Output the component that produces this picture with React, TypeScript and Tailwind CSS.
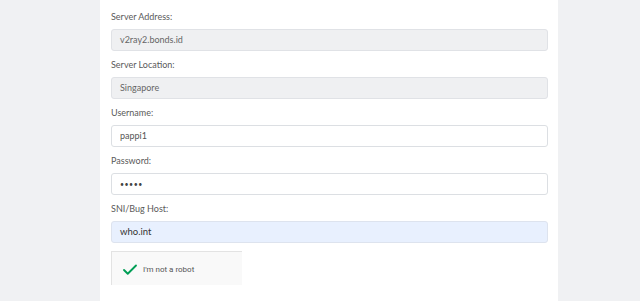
import { Check } from "lucide-react";

const fields = [
  { label: "Server Address:", value: "v2ray2.bonds.id", kind: "disabled" },
  { label: "Server Location:", value: "Singapore", kind: "disabled" },
  { label: "Username:", value: "pappi1", kind: "normal" },
  { label: "Password:", value: "•••••", kind: "password" },
  { label: "SNI/Bug Host:", value: "who.int", kind: "autofill" },
];

const boxClass: Record<string, string> = {
  disabled: "bg-[#eff0f2] border-[#e0e2e6] text-[#666] text-[9px]",
  normal: "bg-white border-[#dcdfe3] text-[#555] text-[9px]",
  password: "bg-white border-[#dcdfe3] text-[#444] text-[7px] tracking-[0.5px]",
  autofill: "bg-[#e8f0fe] border-[#dde3ee] text-[#333] text-[9.5px]",
};

export default function App() {
  return (
    <div
      className="min-h-screen bg-[#f0f1f3] pl-[100px]"
      style={{ fontFamily: "Lato, 'Open Sans', sans-serif" }}
    >
      <div className="h-[301px] w-[458px] bg-white px-[11px] pt-[10px]">
        <div className="flex flex-col gap-[7px]">
          {fields.map((f) => (
            <div key={f.label}>
              <p className="mb-[5px] h-[14px] text-[9px] leading-[14px] text-[#5a5a5a]">
                {f.label}
              </p>
              <div
                className={`flex h-[22px] w-[437px] items-center rounded-[3px] border px-[8px] ${boxClass[f.kind]}`}
              >
                {f.value}
              </div>
            </div>
          ))}
        </div>

        <div className="mt-[8px] flex h-[34px] w-[131px] items-center gap-[4px] border-l border-t border-[#e3e3e3] bg-[#f9f9f9] pl-[9px] pt-[2px]">
          <Check className="h-[18px] w-[18px] text-[#009e55]" strokeWidth={2.5} />
          <span
            className="text-[8px] text-[#555]"
            style={{ fontFamily: "Roboto, sans-serif" }}
          >
            I'm not a robot
          </span>
        </div>
      </div>
    </div>
  );
}
